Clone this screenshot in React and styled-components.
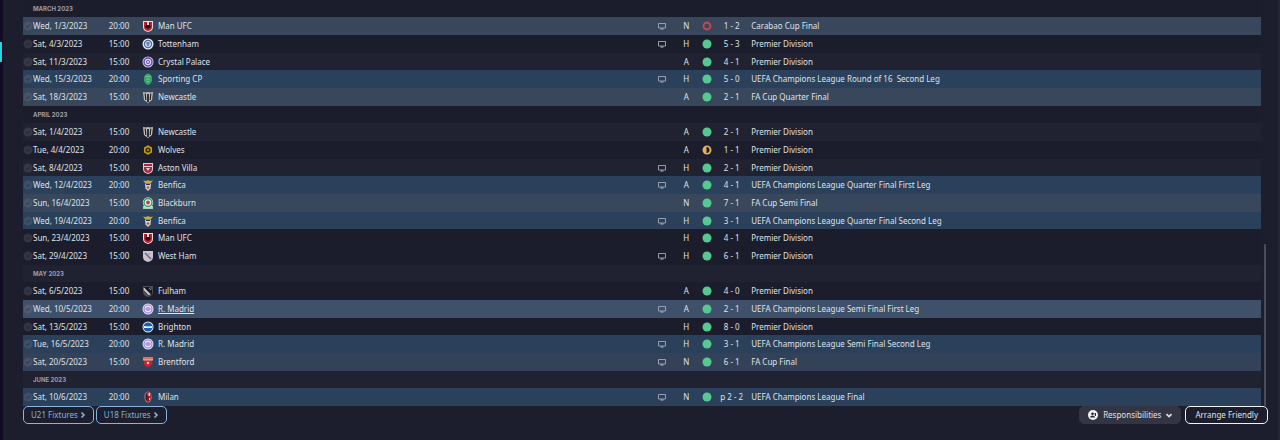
import React from "react";
import styled, { createGlobalStyle, css } from "styled-components";

const GlobalStyle = createGlobalStyle`
  *, *::before, *::after { box-sizing: border-box; }
  body {
    margin: 0;
    background: #1c1e2d;
    color: #dfe2e8;
    font-family: "Noto Sans", "Open Sans", sans-serif;
    font-size: 8px;
    line-height: 16px;
  }
`;

const Screen = styled.div`
  display: flex;
  min-height: 100vh;
`;

const Rail = styled.aside`
  flex: none;
  display: flex;
  flex-direction: column;
  width: 3px;
  padding-top: 42px;
  background: #130b24;
`;

const RailMarker = styled.span`
  width: 2px;
  height: 20px;
  background: #27d3e6;
`;

const Panel = styled.main`
  flex: 1;
  display: flex;
  flex-direction: column;
  min-width: 0;
  padding: 0 10px 0 20px;
  background: #1c1e2d;
`;

const EdgePanel = styled.aside`
  flex: none;
  width: 2px;
  background: #232535;
`;

const ListArea = styled.div`
  display: flex;
  justify-content: space-between;
`;

const Table = styled.table`
  flex: 1;
  table-layout: fixed;
  border-collapse: collapse;
`;

const Col = styled.col`
  width: ${(p) => p.$w};
`;

const rowTones = {
  plain: "#1c1d2c",
  alt: "#212231",
  europe: "#2b405a",
  cup: "#38475c",
  cupLate: "#344259",
  active: "#3f506a",
};

const Row = styled.tr`
  height: 18px;
  background: ${(p) => rowTones[p.$tone]};
  &:nth-child(3n + 1) { height: 17px; }
`;

const Cell = styled.td`
  padding: 0;
  line-height: 16px;
  white-space: nowrap;
  text-align: ${(p) => p.$align || "left"};
  vertical-align: middle;
  svg { display: block; margin: ${(p) => (p.$align === "center" ? "0 auto" : "0")}; }
`;

const MonthCell = styled.th`
  padding: 0 0 0 10px;
  color: #9c9ea8;
  font-family: Inter, sans-serif;
  font-size: 6px;
  font-weight: 700;
  line-height: 16px;
  text-align: left;
  text-transform: uppercase;
`;

const TeamLink = styled.a`
  color: inherit;
  text-decoration: ${(p) => (p.$active ? "underline" : "none")};
  text-underline-offset: 1px;
`;

const ScrollTrack = styled.div`
  display: flex;
  flex-direction: column;
  justify-content: flex-end;
  width: 7px;
  padding-left: 3px;
`;

const ScrollThumb = styled.div`
  width: 2px;
  height: 40%;
  border-radius: 1px;
  background: #4b4d5c;
`;

const Footer = styled.footer`
  display: flex;
  justify-content: space-between;
`;

const ButtonGroup = styled.div`
  display: flex;
  gap: ${(p) => p.$gap}px;
`;

const looks = {
  blue: css`
    gap: 2px;
    padding: 0 7px;
    border-color: #84b4e0;
    color: #86b1dc;
  `,
  filled: css`
    gap: 5px;
    padding: 0 8px;
    border-color: #333544;
    background: #333544;
    color: #dfe2e8;
  `,
  white: css`
    padding: 0 9px;
    border-color: #f0f1f4;
    color: #dfe2e8;
  `,
};

const Button = styled.button`
  display: flex;
  align-items: center;
  height: 18px;
  border: 1px solid;
  border-radius: 5px;
  background: transparent;
  font: inherit;
  line-height: 16px;
  white-space: nowrap;
  cursor: pointer;
  ${(p) => looks[p.$look]}
`;

const Shield = "M1 1h10v6q0 4-5 5Q1 11 1 7z";

const crests = {
  manufc: (
    <>
      <path d={Shield} fill="#e9dcdc" />
      <path d="M2 2h8v5q0 3-4 4Q2 10 2 7z" fill="#c4202c" />
      <path d="M3.500 3h5L7.500 4.500 9 7 6 9 3 7l1.500-2.500z" fill="#26131b" />
      <path d="M5 2h2v3H5z" fill="#e9dcdc" />
    </>
  ),
  tottenham: (
    <>
      <circle cx="6" cy="6" r="5.5" fill="#e4eaf5" />
      <circle cx="6" cy="6" r="3.6" fill="#c7d4ea" stroke="#4a6ba4" strokeWidth="1.2" />
      <path d="M4 5h4M6 5v3" stroke="#3c5c98" strokeWidth="1.2" />
    </>
  ),
  palace: (
    <>
      <circle cx="6" cy="6" r="5.5" fill="#d9d3ee" />
      <circle cx="6" cy="6" r="4" fill="none" stroke="#5a48b0" strokeWidth="1.4" />
      <circle cx="6" cy="6" r="2" fill="#6a55b4" />
      <circle cx="6" cy="6" r="1" fill="#d9d3ee" />
    </>
  ),
  sporting: (
    <>
      <path d="M3 2q3-3 6 0l1 2.500V8q-1 3-4 4-3-1-4-4V4.500z" fill="#37a566" />
      <path d="M3.500 3.500h5M4 6h4M4.500 8.500h3" stroke="#8ed6a4" strokeWidth=".7" />
    </>
  ),
  newcastle: (
    <>
      <path d="M1 1l3 .5L6 1l2 .5 3-.5-1 8-4 3-4-3z" fill="#c2c1b9" />
      <path d="M3.200 2.500l.6 6.500M8.800 2.500L8.200 9" stroke="#20212a" strokeWidth="1.2" />
      <path d="M6 3v8" stroke="#20212a" strokeWidth="1.800" />
    </>
  ),
  wolves: (
    <>
      <circle cx="6" cy="6" r="5.5" fill="#2a2118" />
      <path d="M6 1.2l4 2.3v5l-4 2.3-4-2.3v-5z" fill="#c99a13" />
      <circle cx="6" cy="6" r="2.6" fill="#3a2b12" />
      <circle cx="6" cy="6" r="1.1" fill="#b98c18" />
    </>
  ),
  villa: (
    <>
      <path d={Shield} fill="#e1cbd1" />
      <path d="M2 2h8v2H2zM2 5h8v2q0 3-4 4-4-1-4-4z" fill="#a3293f" />
      <path d="M4 6h4L6 9z" fill="#e5ccd2" />
    </>
  ),
  benfica: (
    <>
      <path d="M1 1.500l3 .5 2-1 2 1 3-.5L9 4H3z" fill="#c5ab3c" />
      <path d="M3 4.500h6l-.5 5L6 12 3.500 9.500z" fill="#d6d2cd" />
      <path d="M4 5h4v1H4z" fill="#283a52" />
      <circle cx="6" cy="8.500" r="1.300" fill="#b5554c" />
    </>
  ),
  blackburn: (
    <>
      <path d="M1 9h10v3H1z" fill="#a8d3bd" />
      <circle cx="6" cy="5.5" r="5.2" fill="#e1eee6" />
      <circle cx="6" cy="5.5" r="4" fill="none" stroke="#2b9b69" strokeWidth="1.4" />
      <circle cx="6" cy="5.5" r="1.9" fill="#c63a4b" />
    </>
  ),
  westham: (
    <>
      <path d={Shield} fill="#c8c1cf" />
      <path d="M3 3l6 6" stroke="#746984" strokeWidth="1.500" />
      <path d="M8 3L6 5" stroke="#9a90a8" />
    </>
  ),
  fulham: (
    <>
      <path d={Shield} fill="#4b4d54" />
      <path d="M2 2l8 8V5L7 2z" fill="#17181f" />
      <path d="M2 3l6 6-1 1-5-5zM7 3l2 2" stroke="#c2c4c7" strokeWidth=".7" fill="#c2c4c7" />
    </>
  ),
  madrid: (
    <>
      <circle cx="6" cy="6" r="5.5" fill="#e9e3fa" />
      <circle cx="6" cy="6" r="4" fill="none" stroke="#9b7fdb" strokeWidth="1.1" />
      <path d="M4 5h4v2H4zM6 4v4" stroke="#8f73d4" strokeWidth=".8" fill="none" />
    </>
  ),
  brighton: (
    <>
      <circle cx="6" cy="6" r="5.5" fill="#dfeaf7" />
      <circle cx="6" cy="6" r="4.6" fill="#1d5fae" />
      <path d="M2 5l4 .5 4-.5v2H2z" fill="#eef4fb" />
    </>
  ),
  brentford: (
    <>
      <path d="M1 1h10v3H1z" fill="#e0705a" />
      <path d="M2 4h8v4q-1 3-4 3.500Q3 11 2 8z" fill="#c9202f" />
      <circle cx="6" cy="7" r="1.300" fill="#f1c9c4" />
      <path d="M1 4h10" stroke="#efd7d0" strokeWidth=".8" />
    </>
  ),
  milan: (
    <>
      <ellipse cx="6" cy="6" rx="3.600" ry="5.500" fill="#a98b92" />
      <ellipse cx="6" cy="6" rx="3" ry="5" fill="#b4242e" />
      <path d="M4.500 3v6M6 5v5" stroke="#2a1820" strokeWidth=".8" />
      <path d="M6.500 2H8v3H6.500zM7 7h1v2H7z" fill="#e9dada" />
    </>
  ),
};

const Crest = ({ id }) => (
  <svg width="12" height="12" viewBox="0 0 12 12" aria-hidden="true">{crests[id]}</svg>
);

const CheckIcon = () => (
  <svg width="10" height="10" viewBox="0 0 10 10" aria-hidden="true">
    <circle cx="5" cy="5" r="4.500" fill="#8a90a0" fillOpacity=".2" />
    <path d="M3 5l1.500 1.500L7 3.500" fill="none" stroke="#10121c" strokeOpacity=".45" />
  </svg>
);

const TvIcon = () => (
  <svg width="8" height="8" viewBox="0 0 8 8" role="img" aria-label="Televised">
    <path d="M.5 1.500h7v4.500h-7z" fill="none" stroke="#a3a9b6" strokeWidth=".9" />
    <path d="M2.500 7h3" stroke="#b7bcc7" />
  </svg>
);

const ResultIcon = ({ result }) => (
  <svg width="10" height="10" viewBox="0 0 10 10" role="img" aria-label={result}>
    {result === "Win" && <circle cx="5" cy="5" r="4.500" fill="#54ca91" />}
    {result === "Loss" && <circle cx="5" cy="5" r="3.500" fill="none" stroke="#c9484f" strokeWidth="1.800" />}
    {result === "Draw" && (
      <>
        <circle cx="5" cy="5" r="4.500" fill="#e0b05a" />
        <path d="M4.500 2a3 3 0 0 1 0 6z" fill="#1c1d2c" />
      </>
    )}
  </svg>
);

const Chevron = ({ down }) => (
  <svg width="6" height="8" viewBox="0 0 6 8" aria-hidden="true">
    <path
      d={down ? "M.5 3L3 5.500 5.500 3" : "M1.500 1.500L4 4 1.500 6.500"}
      fill="none"
      stroke="currentColor"
      strokeWidth="1.600"
    />
  </svg>
);

const PersonIcon = () => (
  <svg width="10" height="10" viewBox="0 0 10 10" aria-hidden="true">
    <circle cx="5" cy="5" r="5" fill="#f4f5f7" />
    <circle cx="4.500" cy="3.800" r="1.300" fill="#262838" />
    <path d="M2 7.500q0-2 2.500-2T7 7.500zM6.500 3h1.500v3H7z" fill="#262838" />
  </svg>
);

const UCL = "UEFA Champions League";
const PREM = "Premier Division";

const rows = [
  ["March 2023", "plain"],
  ["Wed, 1/3/2023", "20:00", "manufc", "Man UFC", 1, "N", "Loss", "1 - 2", "Carabao Cup Final", "cup"],
  ["Sat, 4/3/2023", "15:00", "tottenham", "Tottenham", 1, "H", "Win", "5 - 3", PREM, "plain"],
  ["Sat, 11/3/2023", "15:00", "palace", "Crystal Palace", 0, "A", "Win", "4 - 1", PREM, "alt"],
  ["Wed, 15/3/2023", "20:00", "sporting", "Sporting CP", 1, "H", "Win", "5 - 0", `${UCL} Round of 16 \u00a0Second Leg`, "europe"],
  ["Sat, 18/3/2023", "15:00", "newcastle", "Newcastle", 0, "A", "Win", "2 - 1", "FA Cup Quarter Final", "cup"],
  ["April 2023", "plain"],
  ["Sat, 1/4/2023", "15:00", "newcastle", "Newcastle", 0, "A", "Win", "2 - 1", PREM, "alt"],
  ["Tue, 4/4/2023", "20:00", "wolves", "Wolves", 0, "A", "Draw", "1 - 1", PREM, "plain"],
  ["Sat, 8/4/2023", "15:00", "villa", "Aston Villa", 1, "H", "Win", "2 - 1", PREM, "alt"],
  ["Wed, 12/4/2023", "20:00", "benfica", "Benfica", 1, "A", "Win", "4 - 1", `${UCL} Quarter Final First Leg`, "europe"],
  ["Sun, 16/4/2023", "15:00", "blackburn", "Blackburn", 0, "N", "Win", "7 - 1", "FA Cup Semi Final", "cup"],
  ["Wed, 19/4/2023", "20:00", "benfica", "Benfica", 1, "H", "Win", "3 - 1", `${UCL} Quarter Final Second Leg`, "europe"],
  ["Sun, 23/4/2023", "15:00", "manufc", "Man UFC", 0, "H", "Win", "4 - 1", PREM, "plain"],
  ["Sat, 29/4/2023", "15:00", "westham", "West Ham", 1, "H", "Win", "6 - 1", PREM, "plain"],
  ["May 2023", "alt"],
  ["Sat, 6/5/2023", "15:00", "fulham", "Fulham", 0, "A", "Win", "4 - 0", PREM, "plain"],
  ["Wed, 10/5/2023", "20:00", "madrid", "R. Madrid", 1, "A", "Win", "2 - 1", `${UCL} Semi Final First Leg`, "active"],
  ["Sat, 13/5/2023", "15:00", "brighton", "Brighton", 0, "H", "Win", "8 - 0", PREM, "plain"],
  ["Tue, 16/5/2023", "20:00", "madrid", "R. Madrid", 1, "H", "Win", "3 - 1", `${UCL} Semi Final Second Leg`, "europe"],
  ["Sat, 20/5/2023", "15:00", "brentford", "Brentford", 1, "N", "Win", "6 - 1", "FA Cup Final", "cupLate"],
  ["June 2023", "alt"],
  ["Sat, 10/6/2023", "20:00", "milan", "Milan", 1, "N", "Win", "p 2 - 2", `${UCL} Final`, "europe"],
];

const columns = ["10px", "68px", "36px", "21px", "40%", "18px", "30px", "11px", "39px", "auto"];

const Fixture = ({ data }) => {
  const [date, time, crest, team, tv, venue, result, score, competition, tone] = data;
  return (
    <Row $tone={tone}>
      <Cell><CheckIcon /></Cell>
      <Cell>{date}</Cell>
      <Cell $align="center">{time}</Cell>
      <Cell $align="center"><Crest id={crest} /></Cell>
      <Cell><TeamLink href="#team" $active={tone === "active"}>{team}</TeamLink></Cell>
      <Cell $align="center">{tv ? <TvIcon /> : null}</Cell>
      <Cell $align="center">{venue}</Cell>
      <Cell $align="center"><ResultIcon result={result} /></Cell>
      <Cell $align="center">{score}</Cell>
      <Cell>{competition}</Cell>
    </Row>
  );
};

export default function App() {
  return (
    <>
      <GlobalStyle />
      <Screen>
        <Rail><RailMarker /></Rail>
        <Panel>
          <ListArea>
            <Table>
              <colgroup>
                {columns.map((w, i) => <Col key={i} $w={w} />)}
              </colgroup>
              <tbody>
                {rows.map((r) =>
                  r.length === 2 ? (
                    <Row key={r[0]} $tone={r[1]}>
                      <MonthCell colSpan={10} scope="rowgroup">{r[0]}</MonthCell>
                    </Row>
                  ) : (
                    <Fixture key={r[0]} data={r} />
                  )
                )}
              </tbody>
            </Table>
            <ScrollTrack><ScrollThumb /></ScrollTrack>
          </ListArea>
          <Footer>
            <ButtonGroup $gap={2}>
              <Button type="button" $look="blue">U21 Fixtures<Chevron /></Button>
              <Button type="button" $look="blue">U18 Fixtures<Chevron /></Button>
            </ButtonGroup>
            <ButtonGroup $gap={4}>
              <Button type="button" $look="filled"><PersonIcon />Responsibilities<Chevron down /></Button>
              <Button type="button" $look="white">Arrange Friendly</Button>
            </ButtonGroup>
          </Footer>
        </Panel>
        <EdgePanel />
      </Screen>
    </>
  );
}
